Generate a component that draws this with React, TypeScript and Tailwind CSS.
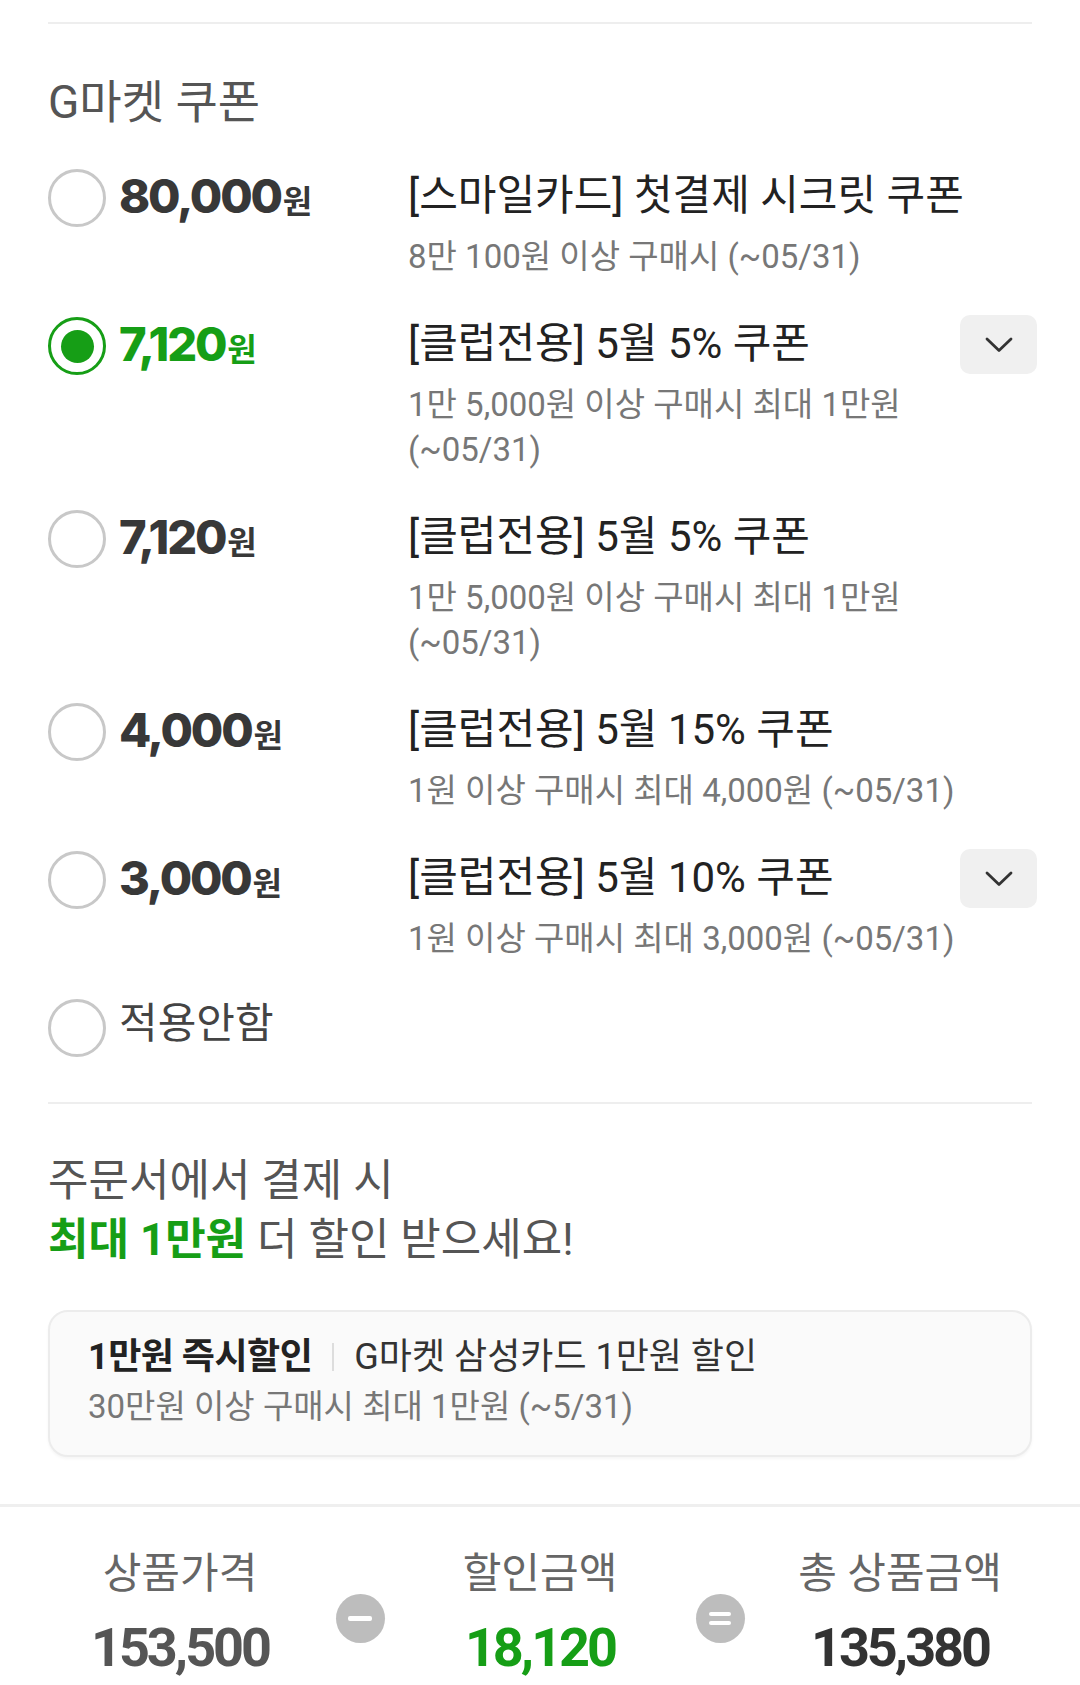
import React from "react";

type Coupon = {
  amount: string;
  title: string;
  sub: string[];
  selected?: boolean;
  chevron?: boolean;
};

const coupons: Coupon[] = [
  { amount: "80,000", title: "[스마일카드] 첫결제 시크릿 쿠폰", sub: ["8만 100원 이상 구매시 (~05/31)"] },
  {
    amount: "7,120",
    title: "[클럽전용] 5월 5% 쿠폰",
    sub: ["1만 5,000원 이상 구매시 최대 1만원", "(~05/31)"],
    selected: true,
    chevron: true,
  },
  { amount: "7,120", title: "[클럽전용] 5월 5% 쿠폰", sub: ["1만 5,000원 이상 구매시 최대 1만원", "(~05/31)"] },
  { amount: "4,000", title: "[클럽전용] 5월 15% 쿠폰", sub: ["1원 이상 구매시 최대 4,000원 (~05/31)"] },
  { amount: "3,000", title: "[클럽전용] 5월 10% 쿠폰", sub: ["1원 이상 구매시 최대 3,000원 (~05/31)"], chevron: true },
];

function Radio({ selected }: { selected?: boolean }) {
  if (selected) {
    return (
      <div className="w-[58px] h-[58px] shrink-0 rounded-full border-[3px] border-[#169e16] flex items-center justify-center mt-[4px]">
        <div className="w-[33px] h-[33px] rounded-full bg-[#169e16]" />
      </div>
    );
  }
  return <div className="w-[58px] h-[58px] shrink-0 rounded-full border-[3px] border-[#c8c8c8] mt-[4px]" />;
}

function Chevron() {
  return (
    <div className="w-[77px] h-[59px] shrink-0 rounded-[10px] bg-[#f0f0f0] flex items-center justify-center -mr-[5px] -mt-[3px]">
      <svg width="28" height="16" viewBox="0 0 28 16" fill="none">
        <path d="M2 2 L14 13.5 L26 2" stroke="#333333" strokeWidth="2.8" strokeLinecap="round" strokeLinejoin="round" />
      </svg>
    </div>
  );
}

export default function App() {
  return (
    <div className="w-[1080px] bg-white font-['Roboto','Noto_Sans_CJK_KR',sans-serif]">
      <div className="px-[48px]">
        <div className="pt-[22px]">
          <div className="h-[2px] bg-[#eeeeee]" />
        </div>

        <div className="mt-[52px] text-[46px] leading-[52px] text-[#555555]">G마켓 쿠폰</div>

        <div className="mt-[42px] flex flex-col gap-[39px]">
          {coupons.map((c, i) => (
            <div key={i} className="flex items-start">
              <div className="w-[360px] shrink-0 h-[52px] flex items-center gap-[13px]">
                <Radio selected={c.selected} />
                <div
                  className={
                    "flex items-baseline font-bold " + (c.selected ? "text-[#169e16]" : "text-[#383838]")
                  }
                >
                  <span className="font-['Inter',sans-serif] font-extrabold text-[47px] tracking-[-2.2px] leading-[52px]">
                    {c.amount}
                  </span>
                  <span className="font-['Noto_Sans_CJK_KR',sans-serif] font-bold text-[32px] ml-[2px]">원</span>
                </div>
              </div>
              <div className="flex-1 min-w-0">
                <div className="text-[42px] leading-[52px] text-[#222222] whitespace-nowrap">{c.title}</div>
                <div className="mt-[12px] text-[33px] leading-[45px] text-[#777777]">
                  {c.sub.map((s, j) => (
                    <div key={j} className="whitespace-nowrap">
                      {s}
                    </div>
                  ))}
                </div>
              </div>
              {c.chevron && <Chevron />}
            </div>
          ))}

          <div className="flex items-start">
            <div className="h-[52px] flex items-center gap-[13px]">
              <Radio />
              <span className="text-[42px] leading-[52px] text-[#444444] -mt-[4px]">적용안함</span>
            </div>
          </div>
        </div>

        <div className="mt-[50px] h-[2px] bg-[#eeeeee]" />

        <div className="mt-[48px] text-[44px] leading-[59px] text-[#555555]">
          <div>주문서에서 결제 시</div>
          <div>
            <span className="font-bold text-[#169e16]">최대 1만원</span> 더 할인 받으세요!
          </div>
        </div>

        <div className="mt-[40px] rounded-[20px] border-2 border-[#ececec] bg-[#fafafa] px-[38px] pt-[22px] pb-[26px] shadow-[0_2px_3px_rgba(0,0,0,0.04)]">
          <div className="flex items-center leading-[46px] whitespace-nowrap">
            <span className="font-bold text-[36px] text-[#222222] tracking-[-0.5px]">1만원 즉시할인</span>
            <span className="mx-[20px] w-[2px] h-[28px] bg-[#dddddd]" />
            <span className="text-[36px] text-[#333333]">G마켓 삼성카드 1만원 할인</span>
          </div>
          <div className="mt-[5px] text-[33px] leading-[44px] text-[#777777] whitespace-nowrap">
            30만원 이상 구매시 최대 1만원 (~5/31)
          </div>
        </div>
      </div>

      <div className="mt-[47px] border-t-[3px] border-[#efefef] pt-[42px] pb-[6px] flex">
        <div className="flex-1 flex flex-col items-center">
          <div className="text-[42px] leading-[50px] text-[#666666]">상품가격</div>
          <div className="mt-[17px] font-['Roboto',sans-serif] font-bold text-[54px] leading-[64px] tracking-[-3px] text-[#555555]">
            153,500
          </div>
        </div>
        <div className="w-0 flex justify-center">
          <div className="mt-[45px] w-[49px] h-[49px] shrink-0 rounded-full bg-[#bdbdbd] flex items-center justify-center">
            <div className="w-[24px] h-[5px] rounded-[2px] bg-white" />
          </div>
        </div>
        <div className="flex-1 flex flex-col items-center">
          <div className="text-[42px] leading-[50px] text-[#666666]">할인금액</div>
          <div className="mt-[17px] font-['Roboto',sans-serif] font-bold text-[54px] leading-[64px] tracking-[-3px] text-[#169e16]">
            18,120
          </div>
        </div>
        <div className="w-0 flex justify-center">
          <div className="mt-[45px] w-[49px] h-[49px] shrink-0 rounded-full bg-[#bdbdbd] flex flex-col items-center justify-center gap-[5px]">
            <div className="w-[22px] h-[4px] rounded-[2px] bg-white" />
            <div className="w-[22px] h-[4px] rounded-[2px] bg-white" />
          </div>
        </div>
        <div className="flex-1 flex flex-col items-center">
          <div className="text-[42px] leading-[50px] text-[#666666]">총 상품금액</div>
          <div className="mt-[17px] font-['Roboto',sans-serif] font-bold text-[54px] leading-[64px] tracking-[-3px] text-[#333333]">
            135,380
          </div>
        </div>
      </div>
    </div>
  );
}
